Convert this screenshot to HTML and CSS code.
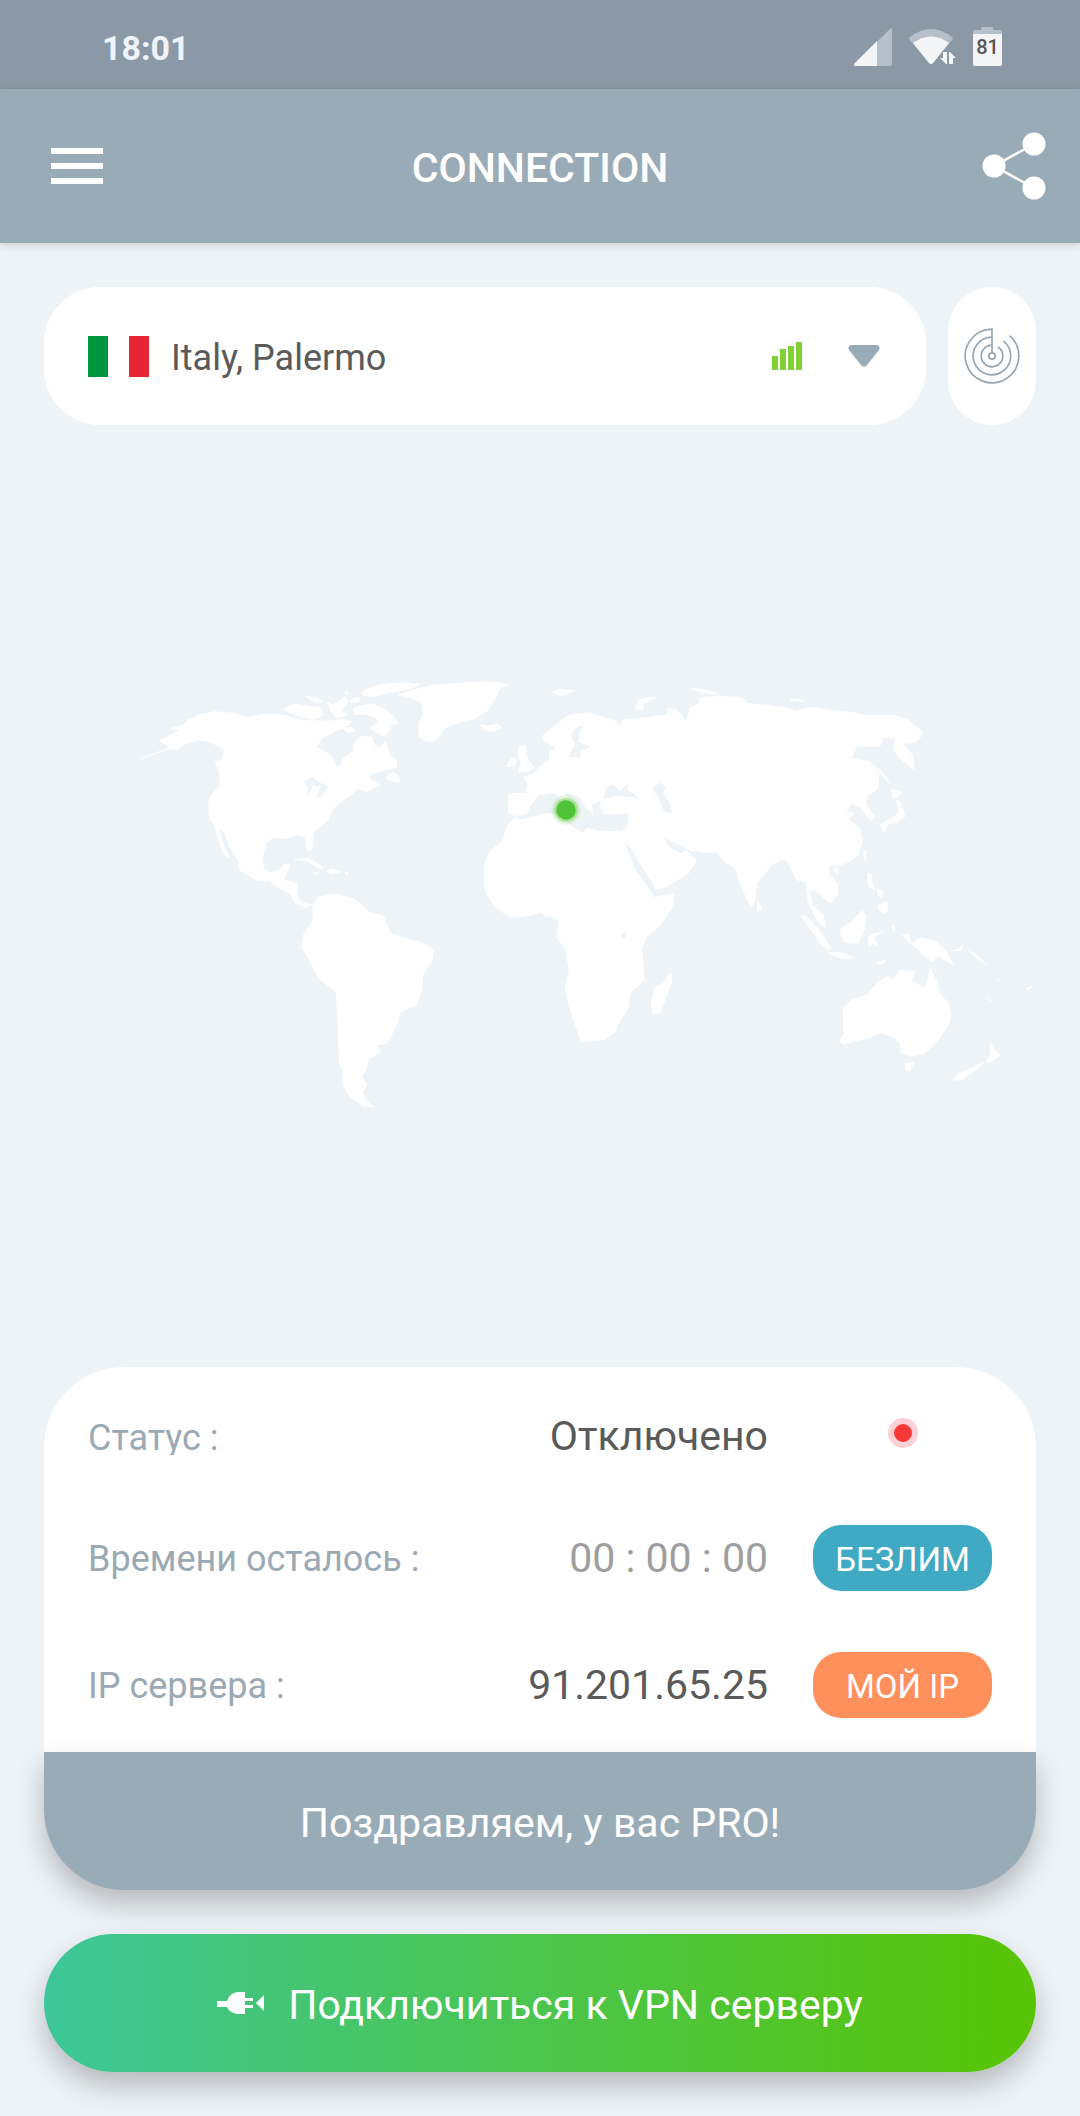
FILE: index.html
```html
<!DOCTYPE html>
<html lang="ru">
<head>
<meta charset="utf-8">
<meta name="viewport" content="width=device-width, initial-scale=1">
<title>Connection</title>
<link rel="stylesheet" href="styles.css">
</head>
<body>
<div class="status-bar">
  <time class="clock">18:01</time>
  <div class="status-icons">
    <svg class="icon-cell" viewBox="0 0 38 38" aria-hidden="true">
      <path d="M1 38Q-1 37 1 35L36 1Q38 -1 38 2V36Q38 38 36 38Z" fill="#b5c0cb"/>
      <path d="M1 38Q-1 37 1 35L23 13V38Z" fill="#f4f5f7"/>
    </svg>
    <svg class="icon-wifi" viewBox="0 0 47 36" aria-hidden="true">
      <path d="M1 11Q-1 9 1 8Q22 -8 43 8Q45 9 43 11L24 34Q22 36 20 34Z" fill="#b5c0cb"/>
      <path d="M4 14Q22 1 40 14L24 34Q22 36 20 34Z" fill="#f4f5f7"/>
      <path d="M31 29H34V23H38V35H37ZM40 35V23H41L47 29H44V35Z" fill="#f4f5f7" stroke="#8a99a5" stroke-width="2" paint-order="stroke"/>
    </svg>
    <div class="battery">
      <svg class="icon-battery" viewBox="0 0 29 39" aria-hidden="true">
        <path d="M0 5Q0 3 2 3H8V1Q8 0 9 0H19Q20 0 20 1V3H27Q29 3 29 5V8H0Z" fill="#b5c0cb"/>
        <path d="M0 7H29V37Q29 39 27 39H2Q0 39 0 37Z" fill="#f4f5f7"/>
      </svg>
      <span class="battery-level">81</span>
    </div>
  </div>
</div>

<header class="app-bar">
  <button class="icon-button" type="button" aria-label="Меню">
    <svg class="icon-menu" viewBox="0 0 52 36" aria-hidden="true"><path d="M0 0H52V6H0ZM0 15H52V21H0ZM0 30H52V36H0Z" fill="#fff"/></svg>
  </button>
  <h1 class="title">CONNECTION</h1>
  <button class="icon-button icon-button-end" type="button" aria-label="Поделиться">
    <svg class="icon-share" viewBox="0 0 64 68" aria-hidden="true">
      <path d="M52 12L12 34L52 56" fill="none" stroke="#fff" stroke-width="2.500"/>
      <circle cx="52" cy="12" r="11.500" fill="#fff"/><circle cx="12" cy="34" r="11.500" fill="#fff"/><circle cx="52" cy="56" r="11.500" fill="#fff"/>
    </svg>
  </button>
</header>

<main class="screen">
  <div class="server-row">
    <label class="server-picker">
      <svg class="flag" viewBox="0 0 61 41" aria-hidden="true"><path d="M0 0H20V41H0Z" fill="#009640"/><path d="M41 0H61V41H41Z" fill="#e52635"/></svg>
      <select class="server-select" aria-label="Сервер"><option>Italy, Palermo</option></select>
      <svg class="icon-bars" viewBox="0 0 30 28" aria-hidden="true"><path d="M0 14H6V28H0ZM8 7H14V28H8ZM16 4H22V28H16ZM24 0H30V28H24Z" fill="#82cf36"/></svg>
      <svg class="icon-arrow" viewBox="0 0 32 22" aria-hidden="true"><path d="M3 0H29Q33 1 31 5L19 20Q16 23 13 20L1 5Q-1 1 3 0Z" fill="#9aabb8"/></svg>
    </label>
    <button class="radar-button" type="button" aria-label="Найти ближайший сервер">
      <svg class="icon-radar" viewBox="0 0 56 56" aria-hidden="true">
        <g fill="none" stroke="#9aa6af" stroke-width="1.700">
          <circle cx="28" cy="28" r="3.200"/>
          <path d="M28 25V1.200A26.800 26.800 0 1 0 45.500 7.700"/>
          <path d="M28 9.200A18.800 18.800 0 1 0 39.500 13.200"/>
          <path d="M28 17.200A10.800 10.800 0 1 0 34 19"/>
        </g>
      </svg>
    </button>
  </div>

  <div class="map-area">
    <svg class="map" viewBox="0 0 3240 1416" role="img" aria-label="Карта мира">
      <g fill="#fff" stroke="#fff" stroke-width="3" stroke-linejoin="round">
        <!-- Americas and Greenland -->
        <g transform="translate(300 0)">
          <path d="M120 298L170 278L210 262L180 242L215 225L240 210L215 205L250 195L265 180L300 163L345 155L400 160L440 172L490 163L550 165L610 182L690 183L730 178L755 185L735 202L715 210L665 235L650 262L690 285L700 300L708 320L722 318L730 295L760 272L762 250L785 228L815 232L825 258L840 265L855 245L870 285L890 300L888 322L850 332L815 340L805 355L840 375L800 395L775 385L745 410L715 430L690 460L685 480L640 515L635 570L622 570L615 530L590 525L560 535L520 532L500 548L487 590L490 625L510 638L538 632L548 615L570 612L560 640L552 660L592 672L590 710L610 730L640 735L615 742L585 728L570 700L535 682L505 662L470 660L420 630L415 600L395 570L372 515L356 502L372 560L388 592L375 585L355 545L345 495L330 480L325 430L335 405L362 375L358 335L345 305L368 300L372 268L330 245L300 240L245 255L230 270L210 265Z"/>
          <path d="M860 350L880 335L900 355L895 368L862 358Z"/>
          <path d="M550 148L580 132L610 136L660 143L672 165L640 178L600 170L575 160Z"/>
          <path d="M615 108L650 115L670 125L650 128ZM680 125L700 135L720 120L735 110L745 125L725 150L740 165L710 175L695 155ZM735 95L745 98L740 104ZM750 120L775 112L780 125L755 128Z"/>
          <path d="M760 145L785 138L815 132L850 145L880 168L895 190L870 195L872 210L850 228L820 212L812 200L835 190L825 170L790 162L765 165ZM730 205L755 202L765 212L745 218Z"/>
          <path d="M785 95L830 76L900 68L960 72L930 86L870 98L820 110L790 105Z"/>
          <path d="M895 105L940 90L1000 75L1100 68L1180 66L1228 74L1198 86L1185 115L1165 150L1125 175L1080 186L1035 205L1010 240L985 245L958 232L955 190L970 165L965 130L940 115Z"/>
          <path d="M582 600L620 594L650 608L672 626L650 622L620 602ZM680 632L700 626L720 636L690 642ZM644 638L656 640L648 644ZM736 638H744V641H736Z"/>
          <path d="M640 740L655 712L700 702L765 718L805 755L850 768L870 818L925 840L970 848L1000 870L995 905L968 945L965 990L948 1035L900 1055L892 1090L862 1150L830 1155L840 1175L825 1188L805 1195L800 1225L785 1250L800 1275L788 1300L800 1325L825 1342L790 1338L750 1310L732 1280L728 1235L718 1210L715 1100L708 995L655 955L632 905L605 865L612 820L638 785Z"/>
        </g>
        <!-- Europe, Africa and the Middle East -->
        <g transform="translate(1380 0)">
          <path d="M60 195L85 198L115 192L124 202L100 214L75 212Z"/>
          <path d="M275 95L310 88L345 92L325 100L300 108ZM525 145L535 122L565 112L590 114L550 130L548 150ZM695 85L740 90L775 102L730 100Z"/>
          <path d="M178 262L195 258L200 290L222 322L210 332L175 336L185 315L175 285ZM145 305L160 292L170 302L162 318L142 320Z"/>
          <path d="M145 400L200 402L205 372L190 352L215 345L245 315L270 300L268 275L290 265L250 240L250 225L290 195L310 175L340 162L390 158L470 185L480 200L490 180L540 175L620 165L625 145L650 150L680 185L690 145L740 118L760 112V578L690 570L655 552L610 530L625 560L660 580L680 572L710 600L685 640L620 680L580 690L560 700L480 560L480 515L505 500L505 460L430 462L420 430L430 415L395 435L398 460L380 445L360 410L310 395L345 440L325 450L290 398L235 405L212 435L200 460L165 468L145 455Z"/>
          <path d="M165 475L185 480L265 460L310 465L320 490L370 520L380 505L430 515L500 515L520 560L575 670L582 712L645 700L635 745L600 795L560 830L545 865L553 960L510 1000L505 1045L480 1080L465 1115L435 1138L365 1145L340 1080L315 985L328 930L315 860L290 835L298 780L255 765L240 758L210 766L150 773L100 735L75 690L75 610L90 575L130 540L140 500Z"/>
          <path d="M632 938L636 965L600 1058L580 1060L574 1035L582 985L610 970Z"/>
        </g>
        <!-- Asia and Oceania -->
        <g transform="translate(2100 0)">
          <path d="M0 115L60 108L130 115L140 130L250 142L290 152L330 142L400 152L460 158L480 165L580 165L620 178L650 200L670 220L650 245L610 250L640 290L640 328L600 295L580 270L588 235L550 232L540 258L470 258L455 295L510 305L535 345L535 385L500 410L498 435L525 470L512 482L480 440L455 430L440 450L425 450L462 460L445 475L480 510L488 545L470 590L430 612L385 618L385 640L412 670L412 705L390 728L345 690L330 690L335 735L370 765L375 800L355 785L325 730L318 665L290 660L260 600L240 600L215 615L170 670L165 720L155 740L140 715L105 625L75 605L50 578L0 575Z"/>
          <path d="M270 120L290 116L310 124ZM520 315L545 335L570 370L545 345ZM575 385L605 398L595 408L578 412ZM590 420L602 430L615 470L590 488L565 490L552 515L540 495L565 480L590 465L597 450ZM402 625L416 628L410 642ZM490 570L500 575L495 600ZM172 725L186 748L172 754Z"/>
          <path d="M502 640L515 642L515 670L525 690L505 678ZM530 685L550 695L545 712L535 705ZM535 735L560 725L565 750L550 760L535 748Z"/>
          <path d="M302 765L320 770L355 808L395 865L385 872L360 850ZM385 878L420 878L465 893L440 896L400 888ZM420 808L455 785L485 752L498 765L492 810L475 850L430 845ZM505 830L520 822L550 815L520 832L535 862L518 850L508 860ZM575 800L582 795L584 815ZM530 908L560 900L545 912Z"/>
          <path d="M605 825L625 822L635 850L665 832L710 845L740 875L762 915L735 902L715 888L695 905L670 885L645 860L625 845ZM755 872L775 868L790 850L782 872ZM800 865L830 885L865 918L830 893ZM858 1005L880 1028L870 1022ZM975 985L1000 977L985 990ZM890 960L898 962L892 966Z" stroke-width="1"/>
          <path d="M430 1045L455 1020L500 1005L535 965L560 950L580 960L600 930L645 935L635 960L672 985L682 970L690 925L700 945L712 965L718 1000L745 1030L753 1060L745 1095L715 1140L675 1180L635 1188L605 1180L600 1145L575 1130L545 1118L500 1135L430 1152L420 1142L432 1120ZM615 1212L642 1208L630 1232L618 1230Z"/>
          <path d="M872 1150L882 1168L900 1185L870 1208L858 1205L870 1185ZM850 1208L835 1225L785 1260L758 1260L775 1242L810 1225Z"/>
        </g>
      </g>
      <!-- Inland waters -->
      <g fill="#eef3f7">
        <path transform="translate(300 0)" d="M610 365L640 350L655 365L685 380L660 415L650 408L662 378L640 378L620 412L625 380Z"/>
        <g transform="translate(1380 0)">
          <path d="M435 390L455 372L480 392L505 370L502 390L540 415L470 408L430 418Z"/>
          <path d="M575 382L600 368L620 382L608 400L630 430L636 460L612 455L598 420Z"/>
          <path d="M372 196L358 222L358 245L392 262L362 272L362 292L325 292L345 250L330 228L345 205Z"/>
          <path d="M492 545L506 556L545 620L578 670L586 690L638 676L645 698L582 710L556 670L530 635Z"/>
          <path d="M484 822L500 815L496 835L486 836Z"/>
        </g>
      </g>
      <circle cx="1698" cy="450" r="44" fill="#6fd04f" opacity=".18"/>
      <circle cx="1698" cy="450" r="36" fill="#6fd04f" opacity=".45"/>
      <circle cx="1698" cy="450" r="29" fill="#4fc235"/>
    </svg>
  </div>

  <section class="info-card">
    <div class="info-rows">
      <div class="info-row info-row-status">
        <span class="label">Статус :</span>
        <span class="value">Отключено</span>
        <span class="status-dot"></span>
      </div>
      <div class="info-row">
        <span class="label">Времени осталось :</span>
        <span class="value value-muted">00 : 00 : 00</span>
        <button class="pill pill-blue" type="button">БЕЗЛИМ</button>
      </div>
      <div class="info-row">
        <span class="label">IP сервера :</span>
        <span class="value">91.201.65.25</span>
        <button class="pill pill-orange" type="button">МОЙ IP</button>
      </div>
    </div>
    <p class="pro-banner">Поздравляем, у вас PRO!</p>
  </section>

  <button class="connect-button" type="button">
    <svg class="icon-plug" viewBox="0 0 47 22" aria-hidden="true">
      <path d="M0 9H10Q13 0 22 0H28V6H36V9H28V13H36V16H28V22H22Q13 22 10 15H0ZM39 11L47 3V19Z" fill="#fff"/>
    </svg>
    <span>Подключиться к VPN серверу</span>
  </button>
</main>
</body>
</html>
```
FILE: styles.css
```css
* {
  box-sizing: border-box;
}

body {
  margin: 0;
  min-height: 100vh;
  display: flex;
  flex-direction: column;
  background: #eef3f7;
  color: #5a5a5a;
  font-family: Roboto, "Noto Sans", sans-serif;
  font-size: 36px;
}

button {
  border: 0;
  padding: 0;
  background: none;
  color: inherit;
  font: inherit;
  cursor: pointer;
}

svg {
  display: block;
  flex: none;
}

.status-bar {
  display: flex;
  align-items: center;
  justify-content: space-between;
  height: 89px;
  padding: 6px 78px 0 102px;
  background: #8a99a5;
}

.clock {
  color: #eff4fc;
  font-size: 34px;
  font-weight: 700;
}

.status-icons {
  display: flex;
  align-items: center;
  gap: 17px;
  padding-bottom: 2px;
}

.icon-cell {
  width: 38px;
  height: 38px;
}

.icon-wifi {
  width: 47px;
  height: 36px;
}

.battery {
  display: grid;
  place-items: center;
}

.icon-battery,
.battery-level {
  grid-area: 1 / 1;
}

.icon-battery {
  width: 29px;
  height: 39px;
}

.battery-level {
  color: #555;
  font-size: 20px;
  font-weight: 500;
  line-height: 24px;
}

.app-bar {
  display: grid;
  grid-template-columns: 1fr auto 1fr;
  align-items: center;
  height: 154px;
  padding: 0 34px 0 51px;
  background: #9aabb8;
  box-shadow: 0 2px 8px rgba(0, 0, 0, 0.16);
  color: #fff;
}

.icon-button {
  justify-self: start;
}

.icon-button-end {
  justify-self: end;
}

.icon-menu {
  width: 52px;
  height: 36px;
}

.icon-share {
  width: 64px;
  height: 68px;
}

.title {
  margin: 0;
  padding: 4px 17px 0 0;
  font-size: 41px;
  font-weight: 500;
  line-height: 48px;
}

.screen {
  flex: 1;
  display: flex;
  flex-direction: column;
  padding: 44px 0;
}

.server-row {
  display: flex;
  gap: 22px;
  margin: 0 44px;
}

.server-picker {
  flex: 1;
  display: flex;
  align-items: center;
  height: 138px;
  padding: 0 46px 0 44px;
  border-radius: 56px;
  background: #fff;
}

.flag {
  width: 61px;
  height: 41px;
}

.server-select {
  flex: 1;
  min-width: 0;
  margin: 0 22px;
  padding: 4px 0 0;
  border: 0;
  appearance: none;
  background: none;
  color: inherit;
  font: inherit;
}

.icon-bars {
  width: 30px;
  height: 28px;
}

.icon-arrow {
  width: 32px;
  height: 22px;
  margin-left: 46px;
}

.radar-button {
  display: grid;
  place-items: center;
  width: 88px;
  border-radius: 44px;
  background: #fff;
}

.icon-radar {
  width: 56px;
  height: 56px;
}

.map-area {
  flex: 1;
  display: flex;
  align-items: center;
}

.map {
  width: 100%;
  height: auto;
}

.info-card {
  margin: 0 44px;
  border-radius: 80px;
  background: #fff;
}

.info-rows {
  padding: 44px 44px 34px;
}

.info-row {
  display: grid;
  grid-template-columns: 1fr auto 179px;
  align-items: center;
  column-gap: 45px;
}

.info-row + .info-row {
  margin-top: 61px;
}

.info-row-status {
  align-items: end;
  height: 44px;
  margin-bottom: 70px;
}

.info-row-status + .info-row {
  margin-top: 0;
}

.label {
  overflow: hidden;
  padding-top: 2px;
  color: #9aa9b3;
}

.info-row-status .label {
  line-height: 34px;
}

.value {
  font-size: 41px;
  line-height: 38px;
}

.value-muted {
  color: #9e9e9e;
}

.status-dot {
  align-self: center;
  justify-self: center;
  width: 30px;
  height: 30px;
  border: 6px solid #fdd0d3;
  border-radius: 50%;
  background: #fa383a;
}

.pill {
  height: 66px;
  padding-top: 2px;
  border-radius: 28px;
  color: #fff;
  font-size: 33px;
}

.pill-blue {
  background: #40a9c4;
}

.pill-orange {
  background: #ff905c;
}

.pro-banner {
  display: flex;
  align-items: center;
  justify-content: center;
  height: 138px;
  margin: 0;
  padding-top: 4px;
  border-radius: 0 0 80px 80px;
  background: #9aabb8;
  box-shadow: 0 14px 28px rgba(0, 0, 0, 0.24);
  color: #fff;
  font-size: 41px;
}

.connect-button {
  display: flex;
  align-items: center;
  justify-content: center;
  gap: 24px;
  height: 138px;
  margin: 44px 44px 0;
  border-radius: 69px;
  background: linear-gradient(90deg, #3ec69a, #4bc54c 50%, #58c404);
  box-shadow: 0 14px 28px rgba(0, 0, 0, 0.24);
  color: #fff;
  font-size: 41px;
}

.connect-button span {
  padding-top: 4px;
}

.icon-plug {
  width: 47px;
  height: 22px;
}
```
